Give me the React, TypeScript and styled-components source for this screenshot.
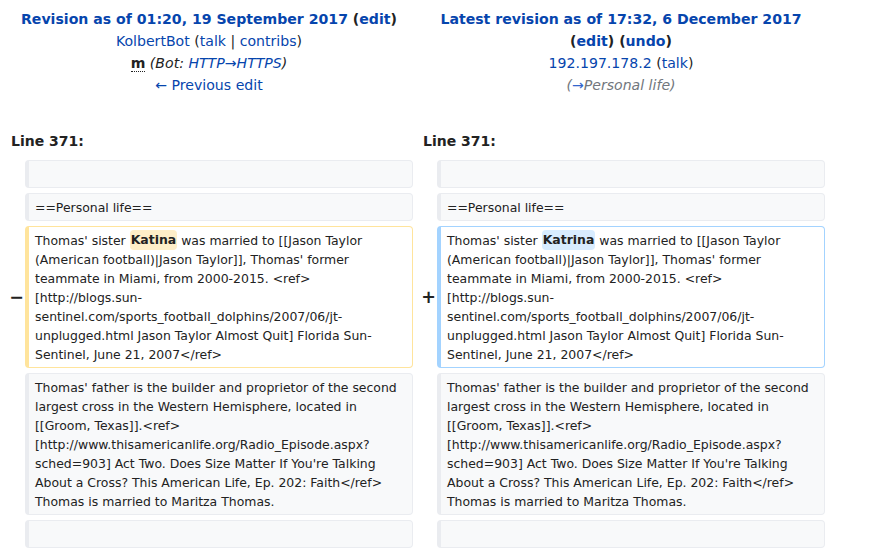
import React from "react";
import styled, { createGlobalStyle } from "styled-components";

const Global = createGlobalStyle`
  html, body { margin: 0; padding: 0; background: #fff; }
  body {
    font-family: "DejaVu Sans", "Noto Sans", sans-serif;
    color: #222;
    font-size: 14px;
  }
`;

const DiffGrid = styled.div`
  display: grid;
  grid-template-columns: 16px 388px 16px 388px;
  column-gap: 4px;
  row-gap: 5px;
  padding: 8px 0 0 5px;
`;

const TitleCell = styled.div`
  grid-column: span 2;
  text-align: center;
  line-height: 22px;
  font-size: 14.1px;
`;

const Line = styled.div`
  min-height: 22px;
`;

const Link = styled.a`
  color: #0645ad;
  text-decoration: none;
`;

const Strong = styled.strong`
  font-weight: 700;
`;

const MinorMark = styled.abbr`
  font-weight: 700;
  text-decoration: none;
  border-bottom: 1px dotted #222;
  cursor: help;
`;

const Comment = styled.span<{ $auto?: boolean }>`
  font-style: italic;
  color: ${(p) => (p.$auto ? "#72777d" : "#222")};
`;

const AutoArrow = styled.a`
  color: #3366cc;
  text-decoration: none;
`;

const LineNo = styled.div`
  grid-column: span 2;
  font-weight: 700;
  font-size: 14px;
  line-height: 22px;
  padding: 29px 6px 3px;
`;

const Marker = styled.div`
  display: flex;
  align-items: center;
  justify-content: flex-end;
  margin-right: -3px;
  font-weight: 700;
  font-size: 17.5px;
  line-height: 1.2;
  color: #222;
  white-space: nowrap;
`;

type Kind = "context" | "deleted" | "added";

const borderOf: Record<Kind, string> = {
  context: "#eaecf0",
  deleted: "#ffe49c",
  added: "#a3d3ff",
};

const Content = styled.div<{ $kind: Kind }>`
  border-style: solid;
  border-width: 1px 1px 1px 4px;
  border-color: ${(p) => borderOf[p.$kind]};
  border-radius: 4px;
  background: ${(p) => (p.$kind === "context" ? "#f8f9fa" : "#fff")};
  padding: 3.5px 6px 3.5px 6px;
  font-size: 12.45px;
  line-height: 19px;
  min-height: 19px;
  word-wrap: break-word;
  overflow-wrap: break-word;
  color: #222;
`;

const Change = styled.span<{ $kind: "deleted" | "added" }>`
  font-weight: 700;
  background: ${(p) => (p.$kind === "deleted" ? "#feeec8" : "#d8ecff")};
  border-radius: 4px;
  padding: 2.2px 1px;
`;

const Empty = styled.div``;

const changedLine = (word: string, kind: "deleted" | "added") => (
  <>
    Thomas' sister <Change $kind={kind}>{word}</Change> was married to [[Jason Taylor (American
    football)|Jason Taylor]], Thomas' former teammate in Miami, from 2000-2015. &lt;ref&gt;[http://blogs.sun-sentinel.com/sports_football_dolphins/2007/06/jt-unplugged.html
    Jason Taylor Almost Quit] Florida Sun-Sentinel, June 21, 2007&lt;/ref&gt;
  </>
);

const fatherText =
  "Thomas' father is the builder and proprietor of the second largest cross in the Western Hemisphere, located in [[Groom, Texas]].<ref>[http://www.thisamericanlife.org/Radio_Episode.aspx?sched=903] Act Two. Does Size Matter If You're Talking About a Cross? This American Life, Ep. 202: Faith</ref> Thomas is married to Maritza Thomas.";

export default function App() {
  return (
    <>
      <Global />
      <DiffGrid>
        <TitleCell>
          <Line>
            <Strong>
              <Link>Revision as of 01:20, 19 September 2017</Link> (<Link>edit</Link>)
            </Strong>
          </Line>
          <Line>
            <Link>KolbertBot</Link> (<Link>talk</Link> | <Link>contribs</Link>)
          </Line>
          <Line>
            <MinorMark title="This is a minor edit">m</MinorMark>{" "}
            <Comment>
              (Bot: <Link>HTTP→HTTPS</Link>)
            </Comment>
          </Line>
          <Line>
            <Link>← Previous edit</Link>
          </Line>
        </TitleCell>
        <TitleCell>
          <Line>
            <Strong>
              <Link>Latest revision as of 17:32, 6 December 2017</Link>
            </Strong>
          </Line>
          <Line>
            <Strong>
              (<Link>edit</Link>) (<Link>undo</Link>)
            </Strong>
          </Line>
          <Line>
            <Link>192.197.178.2</Link> (<Link>talk</Link>)
          </Line>
          <Line>
            <Comment $auto>
              (<AutoArrow>→</AutoArrow>Personal life)
            </Comment>
          </Line>
        </TitleCell>

        <LineNo>Line 371:</LineNo>
        <LineNo>Line 371:</LineNo>

        <Empty />
        <Content $kind="context">
          <br />
        </Content>
        <Empty />
        <Content $kind="context">
          <br />
        </Content>

        <Empty />
        <Content $kind="context">==Personal life==</Content>
        <Empty />
        <Content $kind="context">==Personal life==</Content>

        <Marker>−</Marker>
        <Content $kind="deleted">{changedLine("Katina", "deleted")}</Content>
        <Marker>+</Marker>
        <Content $kind="added">{changedLine("Katrina", "added")}</Content>

        <Empty />
        <Content $kind="context">{fatherText}</Content>
        <Empty />
        <Content $kind="context">{fatherText}</Content>

        <Empty />
        <Content $kind="context">
          <br />
        </Content>
        <Empty />
        <Content $kind="context">
          <br />
        </Content>
      </DiffGrid>
    </>
  );
}
